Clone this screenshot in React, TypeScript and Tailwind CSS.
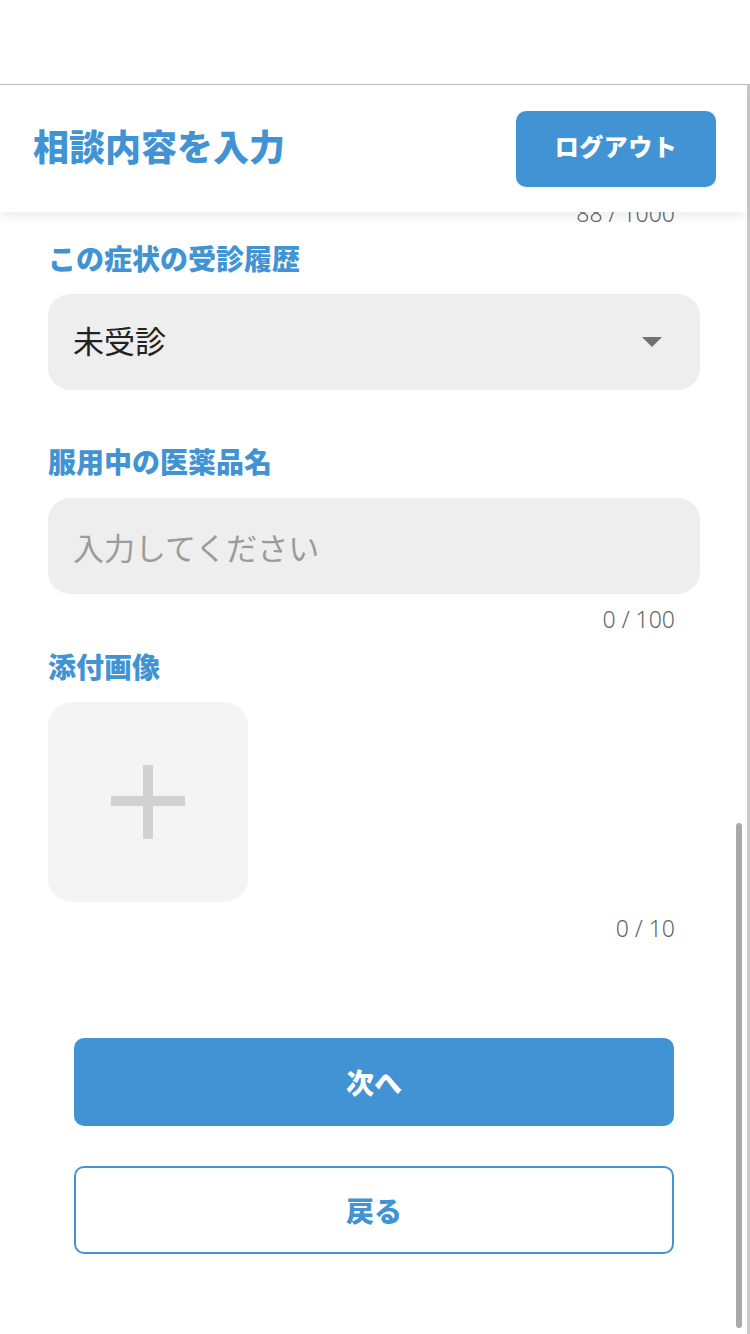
import React, { useState } from 'react';

const font = { fontFamily: '"Noto Sans CJK JP", "Noto Sans", sans-serif' };
const digits = { fontFamily: '"Noto Sans", "Noto Sans CJK JP", sans-serif' };

const Counter: React.FC<{ text: string; className?: string }> = ({ text, className }) => (
    <div
        className={`flex justify-end pr-[25px] h-[30px] items-center text-[23px] font-light text-[#666666] leading-[30px] ${className ?? ''}`}
        style={digits}
    >
        {text}
    </div>
);

const Label: React.FC<{ text: string; className?: string }> = ({ text, className }) => (
    <div className={`text-[28px] font-black text-[#4293d4] leading-[36px] h-[40px] ${className ?? ''}`}>
        {text}
    </div>
);

const App: React.FC = () => {
    const [medicine, setMedicine] = useState('');

    return (
        <div className="w-[750px] h-[1334px] bg-white overflow-hidden relative" style={font}>
            <div className="mt-[84px] h-[1250px] border-t border-t-[#bdbdbd] border-r-[3px] border-r-[#cacaca] flex flex-col">
                {/* header */}
                <div className="relative z-10 h-[127px] bg-white flex items-center justify-between pl-[33px] pr-[31px] shadow-[0_5px_10px_rgba(0,0,0,0.07)]">
                    <h1 className="text-[36px] font-black text-[#4293d4] leading-[40px] -mt-[7px]">相談内容を入力</h1>
                    <button className="w-[200px] h-[76px] pb-[5px] rounded-[10px] bg-[#4293d4] text-white text-[24px] font-black tracking-[0.5px]">
                        ログアウト
                    </button>
                </div>

                <div className="flex flex-col pl-[48px] pr-[47px]">
                    <Counter text="88 / 1000" className="-mt-[14px]" />

                    <Label text="この症状の受診履歴" className="mt-[12px]" />
                    <div className="mt-[14px] h-[96px] rounded-[22px] bg-[#eeeeee] flex items-center justify-between pl-[25px] pr-[37px]">
                        <span className="text-[31px] text-[#222222] -mt-[4px]">未受診</span>
                        <svg width="22" height="12" viewBox="0 0 22 12">
                            <polygon points="1,1 21,1 11,11" fill="#717171" />
                        </svg>
                    </div>

                    <Label text="服用中の医薬品名" className="mt-[53px]" />
                    <input
                        className="mt-[15px] h-[96px] rounded-[22px] bg-[#eeeeee] pl-[25px] text-[31px] text-[#222222] placeholder:text-[#9b9b9b] outline-none"
                        placeholder="入力してください"
                        value={medicine}
                        onChange={(e) => setMedicine(e.target.value)}
                    />
                    <Counter text={`${medicine.length} / 100`} className="mt-[10px]" />

                    <Label text="添付画像" className="mt-[14px]" />
                    <div className="mt-[14px] w-[200px] h-[200px] rounded-[24px] bg-[#f4f4f4] flex items-center justify-center">
                        <svg width="74" height="74" viewBox="0 0 74 74">
                            <rect x="32" y="0" width="10" height="74" fill="#d1d1d1" />
                            <rect x="0" y="31" width="74" height="10" fill="#d1d1d1" />
                        </svg>
                    </div>
                    <Counter text="0 / 10" className="mt-[11px]" />

                    <div className="flex flex-col items-center mt-[95px]">
                        <button className="w-[600px] h-[88px] rounded-[10px] bg-[#4293d4] text-white text-[28px] font-black">
                            次へ
                        </button>
                        <button className="mt-[40px] w-[600px] h-[88px] rounded-[10px] border-2 border-[#4293d4] bg-white text-[#4293d4] text-[28px] font-black">
                            戻る
                        </button>
                    </div>
                </div>
            </div>

            {/* overlay scrollbar */}
            <div className="absolute left-[736px] top-[823px] w-[6px] h-[505px] rounded-full bg-[#a9a9a9]" />
        </div>
    );
};

export default App;
